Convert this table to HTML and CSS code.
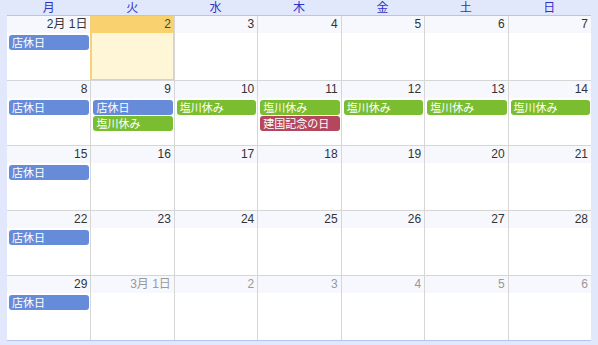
FILE: index.html
```html
<!DOCTYPE html>
<html lang="ja">
<head>
<meta charset="utf-8">
<link rel="stylesheet" href="styles.css">
</head>
<body>
<div class="cal">
  <div class="head">
    <div>月</div><div>火</div><div>水</div><div>木</div><div>金</div><div>土</div><div>日</div>
  </div>
  <div class="week">
    <div class="day"><div class="num">2月 1日</div><div class="ev blue">店休日</div></div>
    <div class="day today"><div class="num">2</div></div>
    <div class="day"><div class="num">3</div></div>
    <div class="day"><div class="num">4</div></div>
    <div class="day"><div class="num">5</div></div>
    <div class="day"><div class="num">6</div></div>
    <div class="day"><div class="num">7</div></div>
  </div>
  <div class="week">
    <div class="day"><div class="num">8</div><div class="ev blue">店休日</div></div>
    <div class="day"><div class="num">9</div><div class="ev blue">店休日</div><div class="ev green">塩川休み</div></div>
    <div class="day"><div class="num">10</div><div class="ev green">塩川休み</div></div>
    <div class="day"><div class="num">11</div><div class="ev green">塩川休み</div><div class="ev red">建国記念の日</div></div>
    <div class="day"><div class="num">12</div><div class="ev green">塩川休み</div></div>
    <div class="day"><div class="num">13</div><div class="ev green">塩川休み</div></div>
    <div class="day"><div class="num">14</div><div class="ev green">塩川休み</div></div>
  </div>
  <div class="week">
    <div class="day"><div class="num">15</div><div class="ev blue">店休日</div></div>
    <div class="day"><div class="num">16</div></div>
    <div class="day"><div class="num">17</div></div>
    <div class="day"><div class="num">18</div></div>
    <div class="day"><div class="num">19</div></div>
    <div class="day"><div class="num">20</div></div>
    <div class="day"><div class="num">21</div></div>
  </div>
  <div class="week">
    <div class="day"><div class="num">22</div><div class="ev blue">店休日</div></div>
    <div class="day"><div class="num">23</div></div>
    <div class="day"><div class="num">24</div></div>
    <div class="day"><div class="num">25</div></div>
    <div class="day"><div class="num">26</div></div>
    <div class="day"><div class="num">27</div></div>
    <div class="day"><div class="num">28</div></div>
  </div>
  <div class="week last">
    <div class="day"><div class="num">29</div><div class="ev blue">店休日</div></div>
    <div class="day other"><div class="num">3月 1日</div></div>
    <div class="day other"><div class="num">2</div></div>
    <div class="day other"><div class="num">3</div></div>
    <div class="day other"><div class="num">4</div></div>
    <div class="day other"><div class="num">5</div></div>
    <div class="day other"><div class="num">6</div></div>
  </div>
</div>
</body>
</html>
```

FILE: styles.css
```css
html, body {
  margin: 0;
  padding: 0;
}
body {
  background: #e2e8fc;
  font-family: "Liberation Sans", "Noto Sans CJK JP", sans-serif;
  width: 598px;
  height: 345px;
  overflow: hidden;
}
.cal {
  padding: 0 7px;
}
.head {
  display: grid;
  grid-template-columns: repeat(7, 1fr);
  height: 15px;
  border-bottom: 1px solid #b6c3ef;
}
.head div {
  text-align: center;
  font-size: 12px;
  line-height: 17px;
  color: #3131c8;
}
.week {
  display: grid;
  grid-template-columns: repeat(7, 1fr);
  height: 64px;
  border-bottom: 1px solid #d6d6d6;
  background: #fff;
}
.week.last {
  border-bottom-color: #b6c3ef;
}
.day {
  border-left: 1px solid #d6d6d6;
  overflow: hidden;
}
.day:first-child {
  border-left: none;
}
.num {
  height: 17px;
  background: #f6f8fe;
  text-align: right;
  padding-right: 3px;
  font-size: 12px;
  line-height: 17px;
  color: #333;
  margin-bottom: 2px;
}
.other .num {
  color: #999;
}
.today {
  background: #fff6d8;
  box-shadow: inset 0 0 0 1px #f4d27c;
  border-left-color: #f4d27c;
}
.today .num {
  background: #f9d16f;
  color: #444;
}
.ev {
  height: 15px;
  margin: 0 1px 1px 2px;
  padding-left: 3px;
  border-radius: 3px;
  color: #fff;
  font-size: 11px;
  line-height: 15px;
  white-space: nowrap;
  font-family: "Noto Sans CJK JP", sans-serif;
}
.blue { background: #668cd9; }
.green { background: #7bbd30; }
.red { background: #b4475c; }
```
